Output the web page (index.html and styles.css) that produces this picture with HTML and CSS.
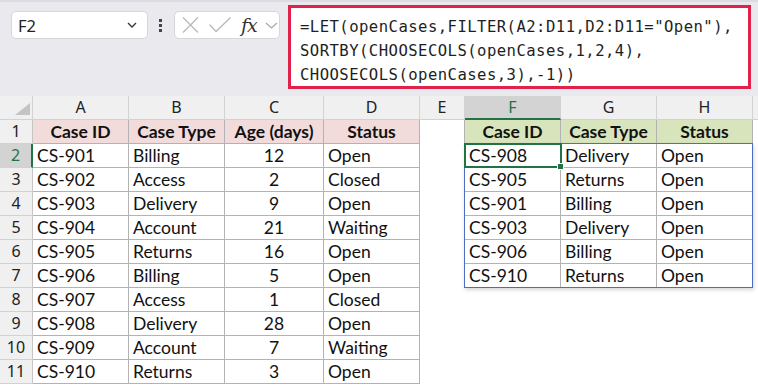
FILE: index.html
```html
<!DOCTYPE html>
<html lang="en">
<head>
    <meta charset="UTF-8">
    <meta name="viewport" content="width=device-width, initial-scale=1.0">
    <title>Open cases - LET / FILTER / SORTBY</title>
    <link rel="stylesheet" href="styles.css">
</head>
<body>
    <!-- Pasek formuły -->
    <div class="formula-bar">
        <div class="name-box">
            <span>F2</span>
            <svg width="10" height="6" viewBox="0 0 10 6"><path d="M1 1 L5 5 L9 1" fill="none" stroke="#333" stroke-width="1.3"/></svg>
        </div>
        <div class="dots"><i></i><i></i><i></i></div>
        <div class="fx-box">
            <svg class="ico-x" width="17" height="16" viewBox="0 0 17 16"><path d="M1 0.5 L16 15.5 M16 0.5 L1 15.5" stroke="#b9b9bd" stroke-width="1.3"/></svg>
            <svg class="ico-ok" width="22" height="16" viewBox="0 0 22 16"><path d="M0.5 7.5 L7 14.5 L21.5 0.5" fill="none" stroke="#b9b9bd" stroke-width="1.3"/></svg>
            <span class="fx">fx</span>
            <svg width="13" height="7" viewBox="0 0 13 7"><path d="M1 1 L6.5 6 L12 1" fill="none" stroke="#a8a8ac" stroke-width="1.2"/></svg>
        </div>
        <div class="formula">
            <div>=LET(openCases,FILTER(A2:D11,D2:D11="Open"),</div>
            <div>SORTBY(CHOOSECOLS(openCases,1,2,4),</div>
            <div>CHOOSECOLS(openCases,3),-1))</div>
        </div>
    </div>

    <!-- Arkusz -->
    <div class="sheet">
        <div class="ch corner"><svg width="33" height="24" viewBox="0 0 33 24"><path d="M15 19 L30 19 L30 7 Z" fill="#c4c4c4"/></svg></div>
        <div class="ch">A</div><div class="ch">B</div><div class="ch">C</div><div class="ch">D</div><div class="ch">E</div><div class="ch sel">F</div><div class="ch">G</div><div class="ch">H</div><div class="ch"></div>

        <div class="rh">1</div>
        <div class="t hp">Case ID</div><div class="t hp">Case Type</div><div class="t hp">Age (days)</div><div class="t hp">Status</div>
        <div class="edge"></div>
        <div class="t hg">Case ID</div><div class="t hg">Case Type</div><div class="t hg">Status</div><div></div>

        <div class="rh sel">2</div>
        <div class="t">CS-901</div><div class="t">Billing</div><div class="t n">12</div><div class="t">Open</div>
        <div></div>
        <div class="t active">CS-908<span class="spill"></span><span class="cursor"></span></div><div class="t">Delivery</div><div class="t">Open</div><div></div>

        <div class="rh">3</div>
        <div class="t">CS-902</div><div class="t">Access</div><div class="t n">2</div><div class="t">Closed</div>
        <div></div>
        <div class="t">CS-905</div><div class="t">Returns</div><div class="t">Open</div><div></div>

        <div class="rh">4</div>
        <div class="t">CS-903</div><div class="t">Delivery</div><div class="t n">9</div><div class="t">Open</div>
        <div></div>
        <div class="t">CS-901</div><div class="t">Billing</div><div class="t">Open</div><div></div>

        <div class="rh">5</div>
        <div class="t">CS-904</div><div class="t">Account</div><div class="t n">21</div><div class="t">Waiting</div>
        <div></div>
        <div class="t">CS-903</div><div class="t">Delivery</div><div class="t">Open</div><div></div>

        <div class="rh">6</div>
        <div class="t">CS-905</div><div class="t">Returns</div><div class="t n">16</div><div class="t">Open</div>
        <div></div>
        <div class="t">CS-906</div><div class="t">Billing</div><div class="t">Open</div><div></div>

        <div class="rh">7</div>
        <div class="t">CS-906</div><div class="t">Billing</div><div class="t n">5</div><div class="t">Open</div>
        <div></div>
        <div class="t">CS-910</div><div class="t">Returns</div><div class="t">Open</div><div></div>

        <div class="rh">8</div>
        <div class="t">CS-907</div><div class="t">Access</div><div class="t n">1</div><div class="t">Closed</div>
        <div></div><div></div><div></div><div></div><div></div>

        <div class="rh">9</div>
        <div class="t">CS-908</div><div class="t">Delivery</div><div class="t n">28</div><div class="t">Open</div>
        <div></div><div></div><div></div><div></div><div></div>

        <div class="rh">10</div>
        <div class="t">CS-909</div><div class="t">Account</div><div class="t n">7</div><div class="t">Waiting</div>
        <div></div><div></div><div></div><div></div><div></div>

        <div class="rh">11</div>
        <div class="t">CS-910</div><div class="t">Returns</div><div class="t n">3</div><div class="t">Open</div>
        <div></div><div></div><div></div><div></div><div></div>
    </div>
</body>
</html>
```

FILE: styles.css
```css
/* Globalne style */
body {
    margin: 0;
    width: 758px;
    height: 385px;
    overflow: hidden;
    background-color: #fff;
    color: #111;
}
/* Pasek formuły */
.formula-bar {
    height: 96px;
    box-sizing: border-box;
    background-color: #e9e9ee;
    border-top: 2px solid #dcdce1;
    padding: 3px 0 0 11px;
    display: flex;
    align-items: flex-start;
}
.name-box {
    width: 137px;
    height: 28px;
    margin-top: 6px;
    box-sizing: border-box;
    background-color: #fff;
    border: 1px solid #d6d6db;
    border-radius: 5px;
    display: flex;
    align-items: center;
    justify-content: space-between;
    padding: 0 10px 0 6px;
    font-family: 'Noto Sans', sans-serif;
    font-size: 16.5px;
    color: #222;
}
.dots {
    margin: 14px 0 0 11px;
    width: 4px;
    display: flex;
    flex-direction: column;
    gap: 2px;
}
.dots i {
    display: block;
    width: 3px;
    height: 3px;
    background-color: #444;
}
.fx-box {
    width: 106px;
    height: 28px;
    margin: 6px 0 0 11px;
    box-sizing: border-box;
    background-color: #fff;
    border: 1px solid #d6d6db;
    border-radius: 5px;
    display: flex;
    align-items: center;
    padding-left: 7px;
}
.ico-x {
    margin-right: 10px;
}
.ico-ok {
    margin-right: 9px;
}
.fx {
    font-family: 'DejaVu Serif', serif;
    font-style: italic;
    font-size: 19px;
    color: #333;
    width: 18px;
    line-height: 20px;
    letter-spacing: -1px;
    margin: 0 6px 0 1px;
}
.formula {
    width: 463px;
    height: 84px;
    margin-left: 8px;
    box-sizing: border-box;
    background-color: #fff;
    border: 3px solid #e0214b;
    padding: 7px 0 0 9px;
    font-family: 'DejaVu Sans Mono', monospace;
    font-size: 15.6px;
    letter-spacing: 0.45px;
    line-height: 24px;
    color: #1e1e1e;
    white-space: nowrap;
}
/* Arkusz */
.sheet {
    display: grid;
    grid-template-columns: 33px 96px 96px 99px 96px 45px 96px 96px 96px 1fr;
    grid-auto-rows: 24px;
    font-family: 'Lato', sans-serif;
    font-size: 17.5px;
}
.sheet > div {
    box-sizing: border-box;
    border-right: 1px solid transparent;
    border-bottom: 1px solid transparent;
    padding: 0 4px;
    line-height: 23px;
    white-space: nowrap;
    overflow: hidden;
}
.ch, .rh {
    background-color: #f0f0f0;
    border-color: #d2d2d2 !important;
    font-family: 'Noto Sans', sans-serif;
    font-size: 16px;
    color: #222;
    text-align: center;
}
.rh {
    border-right-color: #c6c6c6 !important;
    padding: 0 !important;
}
.corner {
    padding: 0 !important;
}
.corner svg {
    display: block;
}
.ch.sel {
    background-color: #d3d3d3;
    color: #217346;
    border-bottom: 2px solid #217346 !important;
}
.rh.sel {
    background-color: #d3d3d3;
    color: #217346;
    border-right: 2px solid #217346 !important;
}
.t {
    border-color: #b3b3b3 !important;
}
.edge {
    border-right-color: #b3b3b3 !important;
}
.hp {
    background-color: #f2dcdb;
    font-weight: bold;
    text-align: center;
}
.hg {
    background-color: #d8e4bc;
    font-weight: bold;
    text-align: center;
}
.n {
    text-align: center;
}
/* Zakres rozlania i aktywna komórka */
.sheet > .active {
    position: relative;
    overflow: visible;
}
.spill {
    position: absolute;
    left: -1px;
    top: -1px;
    width: 289px;
    height: 145px;
    box-sizing: border-box;
    border: 1px solid #4a6fc1;
    box-shadow: 1px 2px 4px rgba(0, 0, 0, 0.16);
    pointer-events: none;
}
.cursor {
    position: absolute;
    left: -1px;
    top: -1px;
    width: 98px;
    height: 25px;
    box-sizing: border-box;
    border: 2px solid #217346;
}
.cursor::after {
    content: '';
    position: absolute;
    right: -4px;
    bottom: -4px;
    width: 5px;
    height: 5px;
    background-color: #217346;
    border: 1px solid #fff;
}
```
